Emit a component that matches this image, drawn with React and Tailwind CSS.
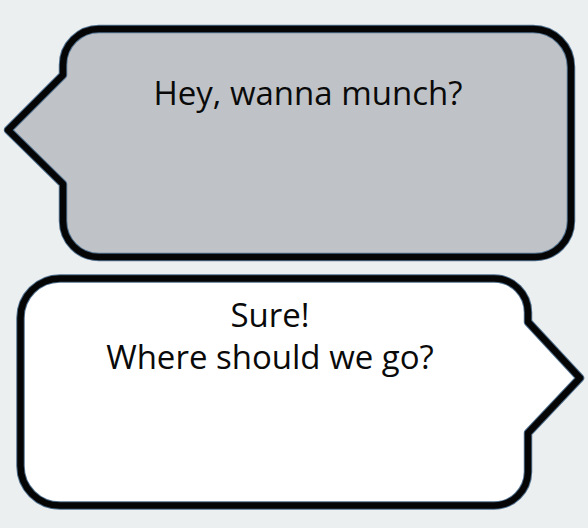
const font = { fontFamily: '"Open Sans", "Noto Sans", sans-serif' };

function Bubble({ height, path, fill, className, children }) {
    return (
        <div className={`relative w-full ${className}`} style={{ height }}>
            <svg className="absolute inset-0" width="588" height={height} viewBox={`0 0 588 ${height}`}>
                <path d={path} fill={fill} stroke="#4f6e8c" strokeWidth="8.5" strokeLinejoin="round" />
                <path d={path} fill="none" stroke="#050505" strokeWidth="6.5" strokeLinejoin="round" />
            </svg>
            <div className="relative">{children}</div>
        </div>
    );
}

// grey bubble, tail pointing left (coordinates inside a 268px high block)
const leftPath =
    'M99 29 H533 A38 38 0 0 1 571 67 V221 A36 36 0 0 1 535 257 H99 A36 36 0 0 1 63 221 V184 L8 130 L63 75 V65 A36 36 0 0 1 99 29 Z';

// white bubble, tail pointing right (block starts at y=268)
const rightPath =
    'M60 10.5 H494 A34 34 0 0 1 528 44.5 V54 L580 110 L528 165 V204 A34 34 0 0 1 494 237.5 H60 A39.5 39.5 0 0 1 20.5 198 V50 A39.5 39.5 0 0 1 60 10.5 Z';

export default function App() {
    return (
        <div className="w-[588px] h-[528px] bg-[#ebeff0] flex flex-col overflow-hidden" style={font}>
            {/* Hey, wanna munch? */}
            <Bubble height={268} path={leftPath} fill="#bfc3c7">
                <p className="pt-[72px] pl-[28px] text-center text-[33px] leading-[42px] text-[#0a0a0a]">
                    Hey, wanna munch?
                </p>
            </Bubble>

            {/* Sure! Where should we go? */}
            <Bubble height={260} path={rightPath} fill="#ffffff">
                <p className="pt-[26px] pr-[48px] text-center text-[33px] leading-[42px] text-[#0a0a0a]">
                    Sure!
                    <br />
                    Where should we go?
                </p>
            </Bubble>
        </div>
    );
}
